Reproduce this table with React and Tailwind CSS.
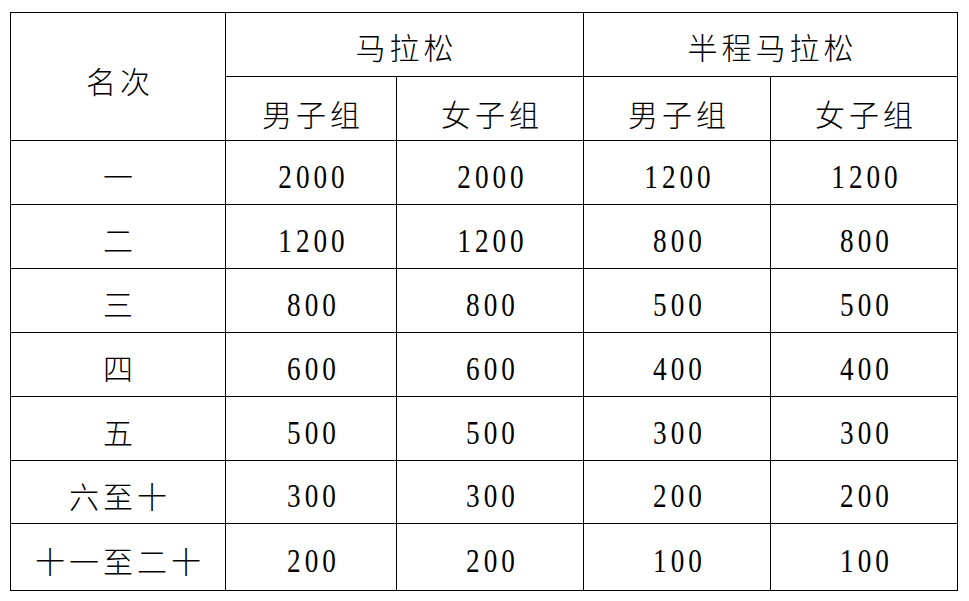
import React from "react";

const rows = [
  ["一", "2000", "2000", "1200", "1200"],
  ["二", "1200", "1200", "800", "800"],
  ["三", "800", "800", "500", "500"],
  ["四", "600", "600", "400", "400"],
  ["五", "500", "500", "300", "300"],
  ["六至十", "300", "300", "200", "200"],
  ["十一至二十", "200", "200", "100", "100"],
];

const cjk = "font-['Noto_Sans_CJK_SC','Noto_Sans_CJK_JP',sans-serif] font-light text-[30px] tracking-[4px] pl-[4px]";

function Num({ v }) {
  return (
    <span className="inline-block origin-center scale-x-[0.8] font-['Liberation_Serif',serif] font-normal text-[34px] leading-none tracking-[5px] pl-[5px]">
      {v}
    </span>
  );
}

export default function App() {
  return (
    <div className="w-[969px] h-[601px] bg-white pt-[12px] pl-[10px]">
      <table className="table-fixed border-collapse border border-black text-black w-[948px]">
        <colgroup>
          <col className="w-[215px]" />
          <col className="w-[171px]" />
          <col className="w-[187px]" />
          <col className="w-[187px]" />
          <col className="w-[187px]" />
        </colgroup>
        <thead>
          <tr className="h-[64px]">
            <th rowSpan={2} className={`border border-black text-center align-middle pt-[8px] ${cjk}`}>名次</th>
            <th colSpan={2} className={`border border-black text-center align-middle pt-[4px] ${cjk}`}>马拉松</th>
            <th colSpan={2} className={`border border-black text-center align-middle pt-[4px] ${cjk}`}>半程马拉松</th>
          </tr>
          <tr className="h-[64px]">
            {["男子组", "女子组", "男子组", "女子组"].map((t, i) => (
              <th key={i} className={`border border-black text-center align-middle pt-[10px] ${cjk}`}>{t}</th>
            ))}
          </tr>
        </thead>
        <tbody>
          {rows.map((r, i) => (
            <tr key={i} className={i === rows.length - 1 ? "h-[67px]" : i === 5 ? "h-[63px]" : "h-[64px]"}>
              <td className={`border border-black text-center align-middle pt-[6px] ${cjk}`}>{r[0]}</td>
              {r.slice(1).map((v, j) => (
                <td key={j} className="border border-black text-center align-middle pt-[8px]">
                  <Num v={v} />
                </td>
              ))}
            </tr>
          ))}
        </tbody>
      </table>
    </div>
  );
}
